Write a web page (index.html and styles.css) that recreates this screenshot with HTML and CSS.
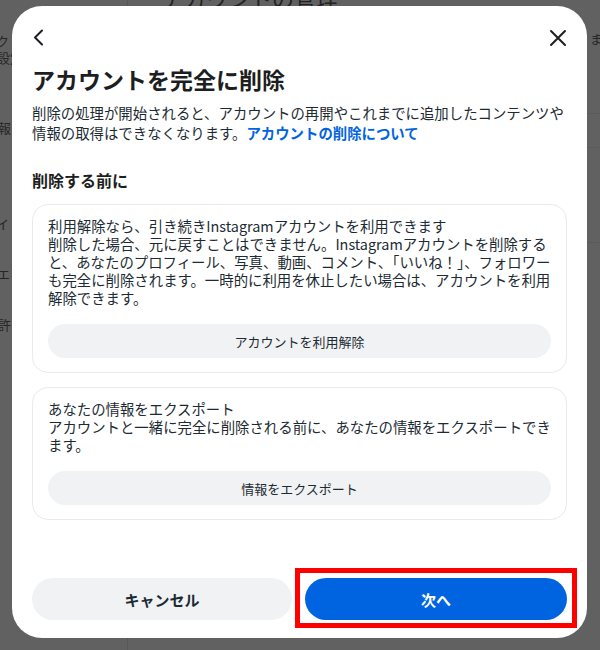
FILE: index.html
```html
<!DOCTYPE html>
<html lang="ja">
<head>
<meta charset="utf-8">
<title>アカウントを完全に削除</title>
<link rel="stylesheet" href="styles.css">
</head>
<body>
<div class="page">
  <div class="divider"></div>
  <div class="hline h1"></div>
  <div class="hline h2"></div>
  <div class="hline h3"></div>
  <div class="bg-title">アカウントの管理</div>
  <span class="bg-txt t1">ク</span>
  <span class="bg-txt t2">設定</span>
  <span class="bg-txt t3">報</span>
  <span class="bg-txt t4">イ</span>
  <span class="bg-txt t5">エ</span>
  <span class="bg-txt t6">許</span>
  <span class="bg-txt t7">ます</span>
</div>

<div class="modal">
  <div class="modal-head">
    <svg class="icon-back" width="12" height="17" viewBox="0 0 12 17"><path d="M10 1.5 L3 8.5 L10 15.5" fill="none" stroke="#1c1e21" stroke-width="2" stroke-linecap="round" stroke-linejoin="round"/></svg>
    <svg class="icon-close" width="18" height="18" viewBox="0 0 18 18"><path d="M2 2 L16 16 M16 2 L2 16" fill="none" stroke="#1c1e21" stroke-width="2" stroke-linecap="round"/></svg>
  </div>
  <div class="modal-body">
    <h1 class="title">アカウントを完全に削除</h1>
    <p class="intro">削除の処理が開始されると、アカウントの再開やこれまでに追加したコンテンツや情報の取得はできなくなります。<a class="link">アカウントの削除について</a></p>
    <h2 class="subtitle">削除する前に</h2>
    <div class="card">
      <div class="card-text">
        <div class="card-head">利用解除なら、引き続きInstagramアカウントを利用できます</div>
        <div>削除した場合、元に戻すことはできません。Instagramアカウントを削除すると、あなたのプロフィール、写真、動画、コメント、「いいね！」、フォロワーも完全に削除されます。一時的に利用を休止したい場合は、アカウントを利用解除できます。</div>
      </div>
      <button class="btn-soft">アカウントを利用解除</button>
    </div>
    <div class="card">
      <div class="card-text">
        <div class="card-head">あなたの情報をエクスポート</div>
        <div>アカウントと一緒に完全に削除される前に、あなたの情報をエクスポートできます。</div>
      </div>
      <button class="btn-soft">情報をエクスポート</button>
    </div>
  </div>
  <div class="modal-foot">
    <button class="btn btn-cancel">キャンセル</button>
    <div class="next-wrap">
      <button class="btn btn-next">次へ</button>
      <div class="highlight"></div>
    </div>
  </div>
</div>
</body>
</html>
```
FILE: styles.css
```css
* { box-sizing: border-box; }
html, body { margin: 0; padding: 0; }
body {
  width: 600px;
  height: 650px;
  overflow: hidden;
  background: #616161;
  font-family: "Noto Sans CJK JP", "Noto Sans", sans-serif;
  color: #1c2b33;
  position: relative;
}
.page { position: absolute; inset: 0; }
.divider { position: absolute; left: 127px; top: 0; bottom: 0; width: 1px; background: #575757; }
.hline { position: absolute; left: 127px; right: 0; height: 1px; background: #5a5a5a; }
.h1 { top: 113px; }
.h2 { top: 147px; }
.h3 { top: 242px; }
.bg-title { position: absolute; left: 162px; top: -17px; font-size: 22px; line-height: 28px; color: #222; white-space: nowrap; }
.bg-txt { position: absolute; font-size: 13px; line-height: 15px; color: #262626; white-space: nowrap; }
.t1 { left: -4px; top: 33px; }
.t2 { left: -3px; top: 50px; }
.t3 { left: -2px; top: 120px; }
.t4 { left: -4px; top: 216px; }
.t5 { left: -3px; top: 266px; }
.t6 { left: -2px; top: 317px; }
.t7 { left: 590px; top: 31px; }

.modal {
  position: absolute;
  left: 12px;
  top: 6px;
  width: 575px;
  height: 632px;
  background: #fff;
  border-radius: 30px;
  display: flex;
  flex-direction: column;
  padding: 0 20px 18px;
}
.modal-head {
  display: flex;
  justify-content: space-between;
  align-items: center;
  padding: 23px 0 0 0;
  height: 40px;
}
.icon-back { display: block; }
.icon-close { display: block; }

.modal-body { flex: 1; }
.title {
  margin: 19px 0 0;
  font-size: 23px;
  line-height: 28px;
  font-weight: 700;
  color: #1c1e21;
}
.intro {
  margin: 10px 0 0;
  font-size: 14.4px;
  line-height: 20px;
  color: #1c2b33;
}
.link { color: #0064e0; font-weight: 700; }
.subtitle {
  margin: 26px 0 0;
  font-size: 16px;
  line-height: 22px;
  font-weight: 700;
  color: #1c1e21;
}
.card {
  margin-top: 13px;
  border: 1px solid #e8eaed;
  border-radius: 16px;
  padding: 12px 15px 14px;
}
.card + .card { margin-top: 14px; }
.card-text {
  font-size: 14.4px;
  line-height: 18px;
  color: #1c2b33;
}
.btn-soft {
  display: block;
  width: 100%;
  height: 34px;
  margin-top: 17px;
  border: 0;
  border-radius: 17px;
  background: #f1f2f4;
  font-family: inherit;
  font-size: 13px;
  color: #1c2b33;
}
.modal-foot {
  display: flex;
  gap: 13px;
}
.btn {
  height: 42px;
  border: 0;
  border-radius: 21px;
  font-family: inherit;
  font-size: 15px;
  font-weight: 700;
}
.btn-cancel { width: 260px; background: #f1f2f4; color: #1c2b33; }
.next-wrap { position: relative; flex: 1; display: flex; }
.btn-next { flex: 1; background: #0064e0; color: #fff; }
.highlight {
  position: absolute;
  left: -10px;
  right: -10px;
  top: -10px;
  bottom: -8px;
  border: 5px solid #ff0000;
}
```
